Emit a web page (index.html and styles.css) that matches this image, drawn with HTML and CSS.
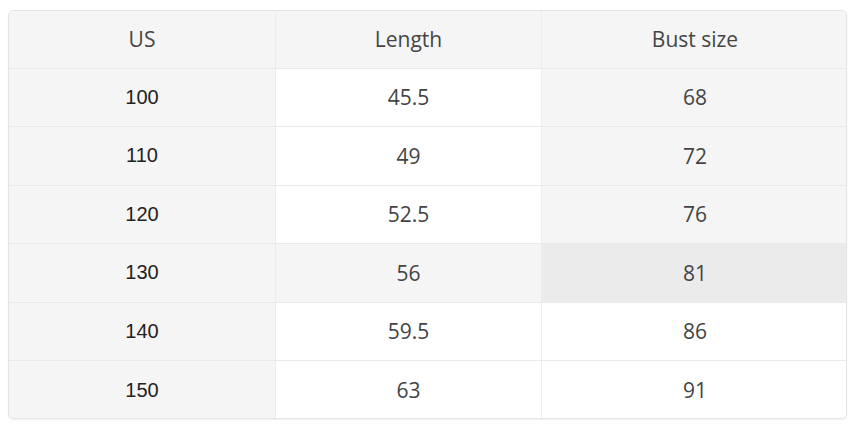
FILE: index.html
```html
<!DOCTYPE html>
<html>
<head>
<meta charset="utf-8">
<link rel="stylesheet" href="styles.css">
</head>
<body>
<div class="table">
  <div class="cell head first">US</div>
  <div class="cell head">Length</div>
  <div class="cell head last">Bust size</div>

  <div class="cell first">100</div>
  <div class="cell white">45.5</div>
  <div class="cell gray last">68</div>

  <div class="cell first">110</div>
  <div class="cell white">49</div>
  <div class="cell gray last">72</div>

  <div class="cell first">120</div>
  <div class="cell white">52.5</div>
  <div class="cell gray last">76</div>

  <div class="cell first">130</div>
  <div class="cell gray">56</div>
  <div class="cell dark last">81</div>

  <div class="cell first">140</div>
  <div class="cell white">59.5</div>
  <div class="cell white last">86</div>

  <div class="cell first end">150</div>
  <div class="cell white end">63</div>
  <div class="cell white last end">91</div>
</div>
</body>
</html>
```

FILE: styles.css
```css
html, body {
  margin: 0;
  padding: 0;
  background: #ffffff;
}
body {
  padding: 10px 9px 0 8px;
  width: 856px;
  height: 428px;
  box-sizing: border-box;
  overflow: hidden;
}
.table {
  display: grid;
  grid-template-columns: 267px 266px 306px;
  grid-template-rows: 58px 58px 59px 58px 59px 58px 59px;
  width: 839px;
  height: 409px;
  box-sizing: border-box;
  border: 1px solid #e4e4e4;
  border-radius: 5px;
  overflow: hidden;
  box-shadow: 0 1px 2px rgba(0,0,0,0.06);
  background: #fff;
}
.cell {
  display: flex;
  align-items: center;
  justify-content: center;
  font-family: "Open Sans", "Noto Sans", sans-serif;
  font-size: 21px;
  color: #444444;
  border-bottom: 1px solid #e9e9e9;
  border-right: 1px solid #ececec;
  box-sizing: border-box;
  padding-bottom: 1px;
}
.cell.last { border-right: none; }
.cell.end { border-bottom: none; }
.head { background: #f5f5f5; color: #454545; }
.first {
  background: #f5f5f5;
  font-family: "Liberation Sans", Arial, sans-serif;
  color: #222222;
  font-size: 20px;
  font-weight: normal;
}
.head.first {
  font-family: "Open Sans", "Noto Sans", sans-serif;
  font-size: 21px;
  color: #454545;
}
.white { background: #ffffff; }
.gray { background: #f5f5f5; }
.dark { background: #ebebeb; }
```
